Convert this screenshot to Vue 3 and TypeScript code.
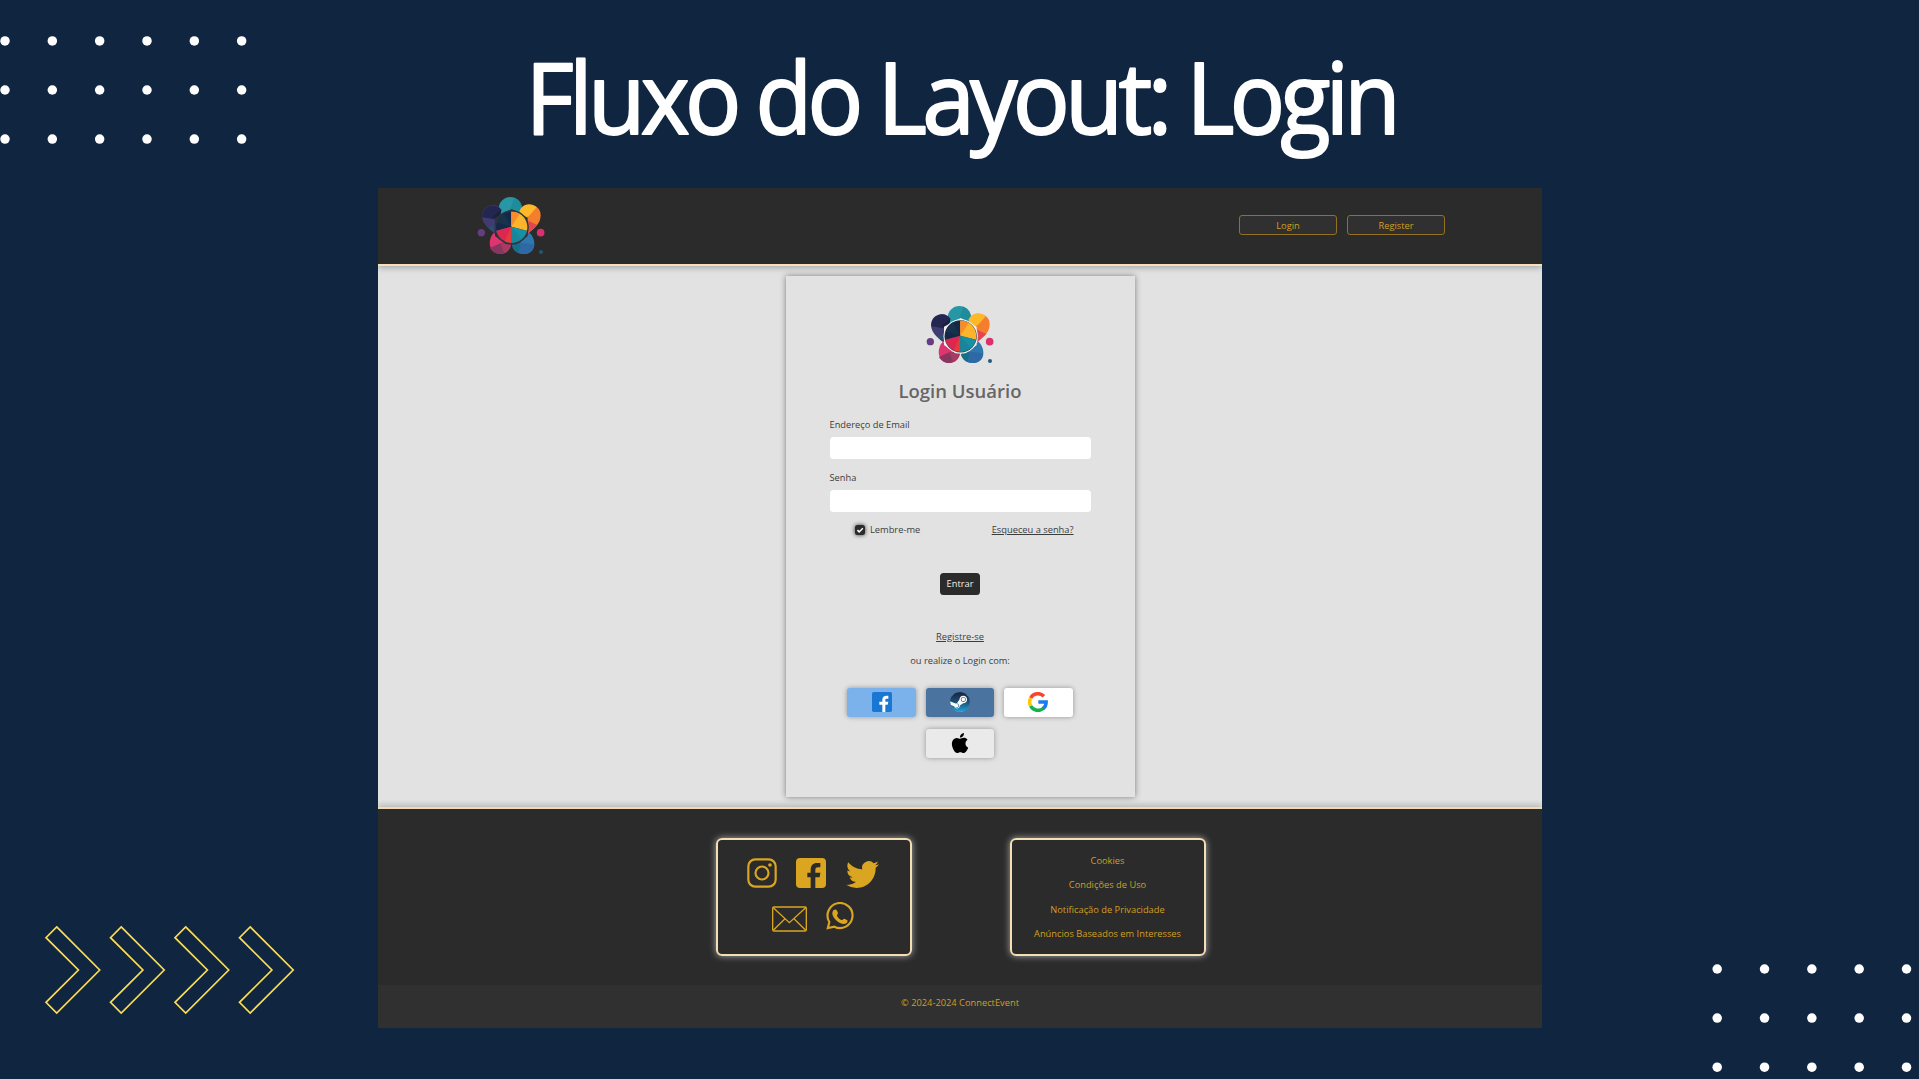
<script setup lang="ts">
import { defineComponent, h } from 'vue'

interface Word {
  text: string
  x: number
  width: number
}

const titleWords: Word[] = [
  { text: 'Fluxo', x: 525.5, width: 211 },
  { text: 'do', x: 755.5, width: 103 },
  { text: 'Layout:', x: 877.5, width: 290 },
  { text: 'Login', x: 1186.5, width: 209.5 },
]

const topDots = Array.from({ length: 18 }, (_, i) => ({ x: 5 + (i % 6) * 47.33, y: 4.9 + Math.floor(i / 6) * 49.1 }))
const bottomDots = Array.from({ length: 15 }, (_, i) => ({ x: 5.2 + (i % 5) * 47.33, y: 5 + Math.floor(i / 5) * 49.1 }))
const chevrons = [0, 1, 2, 3].map((i) => i * 64.5)
const links: string[] = ['Cookies', 'Condições de Uso', 'Notificação de Privacidade', 'Anúncios Baseados em Interesses']

const petal = (d: string, fill: string) => h('path', { d, fill })

const BrandLogo = defineComponent({
  props: { ring: { type: String, default: '#f1f1f3' } },
  setup(props) {
    return () =>
      h('svg', { viewBox: '63 30 206 178', width: 68.67, height: 59.33 }, [
        petal('M128 68a35 35 0 0 1 70 0l-6 38h-58z', '#2796a5'),
        petal('M163 68l12-33a35 35 0 0 1 23 35l-6 22z', '#1f8c9b'),
        petal('M115 142C96 126 78 112 78 89a32 32 0 0 1 58-18l-8 50z', '#403c70'),
        petal('M79 94a32 32 0 0 1 57-23l-12 30z', '#23264f'),
        petal('M110 92l26-21-6 35z', '#1b2040'),
        petal('M112 139L97 124l20-6z', '#2c4e70'),
        petal('M217 142c20-16 37-30 37-54a32 32 0 0 0-58-18l8 50z', '#f47e2d'),
        petal('M190 75a32 32 0 0 1 52-11l-23 26-15 6z', '#fdb927'),
        petal('M217 104l27 13-27 24z', '#e2474f'),
        petal('M113 141c-18 18-18 61 19 63 20 0 30-13 33-27l-18-20z', '#e0346f'),
        petal('M102 186l31-14 30-2c2 17-13 34-31 34-14 0-25-8-30-18z', '#87365f'),
        petal('M133 172l32 3c-2 12-11 21-21 26z', '#a83a63'),
        petal('M221 140c22 23 20 64-18 64-22 0-32-13-35-27l18-18z', '#2d78ae'),
        petal('M168 177l26-8-5 32c-12-4-19-14-21-24z', '#176e89'),
        petal('M194 170l40 5c-1 16-12 29-31 29-6 0-11-1-14-3z', '#2e68a5'),
        petal('M167 69l48 26v55l-34 25h-30l-34-25V95z', props.ring),
        h('circle', { cx: 167, cy: 124, r: 51.5, fill: props.ring }),
        h('circle', { cx: 167, cy: 124, r: 48.5, fill: '#38404c' }),
        petal('M166 122V77a47 47 0 0 0-45 57z', '#14294a'),
        petal('M166 122l-22-40a47 47 0 0 0-22 28z', '#17324a'),
        petal('M166 122V77a47 47 0 0 1 47 57z', '#fdb42b'),
        petal('M166 122V77c9 0 17 2 25 7z', '#f68c2c'),
        petal('M166 122l-45 12a47 47 0 0 0 45 36z', '#dc2850'),
        petal('M166 122l-20 44c6 3 13 4 20 4z', '#e43b3d'),
        petal('M166 122l47 12a47 47 0 0 1-47 36z', '#1690a5'),
        petal('M166 122l31 38c-9 7-19 10-31 10z', '#1a849b'),
        h('circle', { cx: 76, cy: 140, r: 11, fill: '#653d80' }),
        h('circle', { cx: 254, cy: 140, r: 11.5, fill: '#dd2f6c' }),
        h('circle', { cx: 255, cy: 198, r: 6, fill: '#205879' }),
      ])
  },
})
</script>

<template>
  <div class="slide">
    <svg class="dots dots-top" width="252" height="109">
      <circle v-for="(d, i) in topDots" :key="i" :cx="d.x" :cy="d.y" r="4.75" fill="#fff" />
    </svg>
    <svg class="dots dots-bottom" width="207" height="109">
      <circle v-for="(d, i) in bottomDots" :key="i" :cx="d.x" :cy="d.y" r="4.75" fill="#fff" />
    </svg>
    <svg class="chevrons" width="254" height="94" viewBox="43 923 254 94">
      <path
        v-for="x in chevrons"
        :key="x"
        :transform="`translate(${x} 0)`"
        d="M56.7 926.9L99.7 970L56.7 1013.1L46 1002.3L78.4 970L46 937.7Z"
        fill="none"
        stroke="#fbdc57"
        stroke-width="1.7"
      />
    </svg>

    <h1 class="title">
      <svg width="1919" height="188">
        <text
          v-for="w in titleWords"
          :key="w.text"
          :x="w.x"
          y="134"
          :textLength="w.width"
          lengthAdjust="spacingAndGlyphs"
        >{{ w.text }}</text>
      </svg>
    </h1>

    <div class="site">
      <header class="topbar">
        <BrandLogo ring="#2f3338" />
        <nav class="nav">
          <button class="nav-btn">Login</button>
          <button class="nav-btn">Register</button>
        </nav>
      </header>

      <main class="main">
        <form class="card" @submit.prevent>
          <BrandLogo class="card-logo" />
          <h2>Login Usuário</h2>
          <label>Endereço de Email</label>
          <div class="field"></div>
          <label class="second">Senha</label>
          <div class="field"></div>
          <div class="options">
            <span class="remember">
              <span class="check">
                <svg width="8" height="8" viewBox="0 0 8 8">
                  <path d="M1.4 4.1L3.2 5.9L6.8 2.2" fill="none" stroke="#fff" stroke-width="1.5" />
                </svg>
              </span>
              Lembre-me
            </span>
            <a>Esqueceu a senha?</a>
          </div>
          <button class="enter">Entrar</button>
          <a class="signup">Registre-se</a>
          <p>ou realize o Login com:</p>
          <div class="social">
            <span class="provider fb">
              <svg width="20" height="20" viewBox="0 0 60 60">
                <rect width="60" height="60" rx="5" fill="#1976d2" />
                <path d="M31 60V38h-9v-9h9v-6c0-8 5-12 13-12h5v9h-4c-4 0-5 1-5 4v5h9l-2 9h-7v22z" fill="#fff" />
              </svg>
            </span>
            <span class="provider steam">
              <svg width="20" height="20" viewBox="0 0 24 24">
                <defs>
                  <linearGradient id="steamFill" x1="0" y1="0" x2="0" y2="1">
                    <stop offset="0" stop-color="#17213d" />
                    <stop offset="0.5" stop-color="#1d5077" />
                    <stop offset="1" stop-color="#23a4da" />
                  </linearGradient>
                </defs>
                <circle cx="12" cy="12" r="11.6" fill="#fff" />
                <path
                  fill="url(#steamFill)"
                  d="M11.979 0C5.678 0 .511 4.86.022 11.037l6.432 2.658c.545-.371 1.203-.59 1.912-.59.063 0 .125.004.188.006l2.861-4.142V8.91c0-2.495 2.028-4.524 4.524-4.524 2.494 0 4.524 2.031 4.524 4.527s-2.03 4.525-4.524 4.525h-.105l-4.076 2.911c0 .052.004.105.004.159 0 1.875-1.515 3.396-3.39 3.396-1.635 0-3.016-1.173-3.331-2.727L.436 15.27C1.862 20.307 6.486 24 11.979 24c6.627 0 11.999-5.373 11.999-12S18.605 0 11.979 0zM7.54 18.21l-1.473-.61c.262.543.714.999 1.314 1.25 1.297.539 2.793-.076 3.332-1.375.263-.63.264-1.319.005-1.949s-.75-1.121-1.377-1.383c-.624-.26-1.29-.249-1.878-.03l1.523.63c.956.4 1.409 1.5 1.009 2.455-.397.957-1.497 1.41-2.454 1.012H7.54zm11.415-9.303c0-1.662-1.353-3.015-3.015-3.015-1.665 0-3.015 1.353-3.015 3.015 0 1.665 1.35 3.015 3.015 3.015 1.663 0 3.015-1.35 3.015-3.015zm-5.273-.005c0-1.252 1.013-2.266 2.265-2.266 1.249 0 2.266 1.014 2.266 2.266 0 1.251-1.017 2.265-2.266 2.265-1.253 0-2.265-1.014-2.265-2.265z"
                />
              </svg>
            </span>
            <span class="provider google">
              <svg width="20" height="20" viewBox="0 0 60 60">
                <g fill="none" stroke-width="10.5">
                  <path d="M8.1 18A25 25 0 0 1 47.8 12.6" stroke="#f8452c" />
                  <path d="M8.1 42A25 25 0 0 1 8.1 18" stroke="#fdc800" />
                  <path d="M46.5 48.9A25 25 0 0 1 8.1 42" stroke="#12b347" />
                  <path d="M31 30H54.5A25 25 0 0 1 45 50" stroke="#1b7cea" />
                </g>
              </svg>
            </span>
            <span class="provider apple">
              <svg width="20" height="20" viewBox="0 0 24 24">
                <path
                  d="M12.152 6.896c-.948 0-2.415-1.078-3.96-1.04-2.04.027-3.91 1.183-4.961 3.014-2.117 3.675-.546 9.103 1.519 12.09 1.013 1.454 2.208 3.09 3.792 3.039 1.52-.065 2.09-.987 3.935-.987 1.831 0 2.35.987 3.96.948 1.637-.026 2.676-1.48 3.676-2.948 1.156-1.688 1.636-3.325 1.662-3.415-.039-.013-3.182-1.221-3.22-4.857-.026-3.04 2.48-4.494 2.597-4.559-1.429-2.09-3.623-2.324-4.39-2.376-2-.156-3.675 1.09-4.61 1.09zM15.53 3.83c.843-1.012 1.4-2.427 1.245-3.83-1.207.052-2.662.805-3.532 1.818-.78.896-1.454 2.338-1.273 3.714 1.338.104 2.715-.688 3.559-1.701"
                />
              </svg>
            </span>
          </div>
        </form>
      </main>

      <footer class="footer">
        <div class="panels">
          <div class="panel networks">
            <div class="row row-a">
              <svg width="30" height="30" viewBox="0 0 90 90" fill="none" stroke="#daa520" stroke-width="6.5">
                <rect x="4" y="4" width="82" height="82" rx="21" />
                <circle cx="45" cy="45" r="19.5" stroke-width="6.5" />
                <circle cx="69" cy="21" r="5.5" fill="#daa520" stroke="none" />
              </svg>
              <svg width="30" height="30" viewBox="0 0 90 90">
                <path
                  fill="#daa520"
                  d="M12 0H78Q90 0 90 12V78Q90 90 78 90H58V58H71L73 44H58V36C58 30 61 28 66 28H73V15H63C51 15 44 23 44 35V44H34V58H44V90H12Q0 90 0 78V12Q0 0 12 0Z"
                />
              </svg>
              <svg class="bird" width="33" height="33" viewBox="0 0 24 24">
                <path
                  fill="#daa520"
                  d="M23.953 4.57a10 10 0 01-2.825.775 4.958 4.958 0 002.163-2.723c-.951.555-2.005.959-3.127 1.184a4.92 4.92 0 00-8.384 4.482C7.69 8.095 4.067 6.13 1.64 3.162a4.822 4.822 0 00-.666 2.475c0 1.71.87 3.213 2.188 4.096a4.904 4.904 0 01-2.228-.616v.06a4.923 4.923 0 003.946 4.827 4.996 4.996 0 01-2.212.085 4.936 4.936 0 004.604 3.417 9.867 9.867 0 01-6.102 2.105c-.39 0-.779-.023-1.17-.067a13.995 13.995 0 007.557 2.209c9.053 0 13.998-7.496 13.998-13.985 0-.21 0-.42-.015-.63A9.935 9.935 0 0024 4.59z"
                />
              </svg>
            </div>
            <div class="row row-b">
              <svg class="mail" width="35" height="26" viewBox="0 0 105 78" fill="none" stroke="#daa520" stroke-width="4">
                <rect x="2" y="3" width="101" height="72" rx="4" />
                <path d="M4 5L52 50L101 5M4 73L39 38M101 73L66 38" />
              </svg>
              <svg width="28" height="28" viewBox="0 0 84 84">
                <path
                  d="M5.5 78L10 60A37.5 37.5 0 1 1 25 74Z"
                  fill="none"
                  stroke="#daa520"
                  stroke-width="6.5"
                />
                <path
                  d="M23 24c4-3 8-2 10 2l3 7c1 3-4 5-3 8 3 6 8 11 14 13 3 1 5-5 8-4l8 4c3 1 2 6-1 9-7 5-15 3-24-2-9-6-15-13-18-21-2-6-1-12 3-16z"
                  fill="#daa520"
                />
              </svg>
            </div>
          </div>
          <div class="panel links">
            <a v-for="l in links" :key="l">{{ l }}</a>
          </div>
        </div>
        <div class="copyright">© 2024-2024 ConnectEvent</div>
      </footer>
    </div>
  </div>
</template>

<style>
body {
  margin: 0;
  background: #102540;
}
</style>

<style scoped>
.slide {
  position: relative;
  width: 1919px;
  height: 1079px;
  overflow: hidden;
  background: #102540;
  font-family: 'Open Sans', 'Noto Sans', sans-serif;
  font-size: 9.3px;
}
svg {
  display: block;
  flex: none;
}
.dots,
.chevrons {
  position: absolute;
}
.dots-top {
  left: 0;
  top: 36px;
}
.dots-bottom {
  left: 1712px;
  top: 964px;
}
.chevrons {
  left: 43px;
  top: 923px;
}
.title {
  margin: 0;
  height: 188px;
  font-weight: 400;
  font-size: 98.5px;
}
.title text {
  fill: #fff;
  stroke: #fff;
  stroke-width: 2px;
  stroke-linejoin: round;
  letter-spacing: -5px;
}
.site {
  width: 1164px;
  height: 840px;
  margin-left: 378px;
  display: flex;
  flex-direction: column;
  background: #e2e2e2;
  overflow: hidden;
}
.topbar {
  box-sizing: border-box;
  height: 78px;
  flex: none;
  display: flex;
  justify-content: space-between;
  align-items: flex-start;
  padding: 8px 97px 0 98.6px;
  background: #2b2b2b;
  border-bottom: 2px solid #f8dfb4;
  box-shadow: 0 2px 6px rgba(0, 0, 0, 0.25);
}
.nav {
  display: flex;
  gap: 10px;
  margin-top: 19px;
}
.nav-btn {
  box-sizing: border-box;
  width: 98px;
  height: 20px;
  padding: 1px 0 0;
  border: 1px solid #94701f;
  border-radius: 3px;
  background: #303030;
  color: #d19f23;
  font: inherit;
}
.main {
  flex: 1;
  display: flex;
  justify-content: center;
  align-items: flex-start;
  padding-top: 10px;
}
.card {
  box-sizing: border-box;
  width: 349px;
  height: 521px;
  padding: 29px 44px 0;
  background: #e2e2e2;
  box-shadow: 0 0 6px rgba(0, 0, 0, 0.45);
  display: flex;
  flex-direction: column;
  align-items: center;
  color: #3c3c3c;
}
h2 {
  margin: 13.67px 0 0;
  font-size: 18.5px;
  line-height: 26px;
  font-weight: 600;
  color: #666;
}
label {
  align-self: stretch;
  margin-top: 14px;
  line-height: 14px;
}
label.second {
  margin-top: 12px;
}
.field {
  box-sizing: border-box;
  align-self: stretch;
  height: 22px;
  margin-top: 5px;
  border-radius: 3.5px;
  background: #fff;
}
.options {
  align-self: stretch;
  display: flex;
  justify-content: space-between;
  padding: 0 17px 0 25px;
  margin-top: 11px;
  line-height: 14px;
}
.remember {
  display: flex;
  align-items: center;
  gap: 5px;
}
.check {
  width: 10.5px;
  height: 10.5px;
  border-radius: 2.5px;
  background: #2b2b2b;
  box-shadow: 0 0 4px rgba(0, 0, 0, 0.8);
  display: flex;
  align-items: center;
  justify-content: center;
}
a {
  text-decoration: underline;
}
.enter {
  width: 40px;
  height: 22px;
  margin-top: 35.6px;
  padding: 0;
  border: 0;
  border-radius: 3.5px;
  background: #2b2b2b;
  color: #eee;
  font: inherit;
}
.signup {
  margin-top: 35.4px;
  line-height: 14px;
}
p {
  margin: 10px 0 0;
  line-height: 14px;
}
.social {
  display: flex;
  flex-wrap: wrap;
  justify-content: center;
  gap: 12px 9.8px;
  margin-top: 20px;
}
.provider {
  width: 68.7px;
  height: 29px;
  border-radius: 3px;
  box-shadow: 0 0 5px rgba(0, 0, 0, 0.35);
  display: flex;
  align-items: center;
  justify-content: center;
}
.fb {
  background: #7cb2ec;
}
.steam {
  background: #4a749f;
}
.google {
  background: #fff;
}
.apple {
  background: #eaeaea;
}
.footer {
  flex: none;
  height: 221px;
  box-sizing: border-box;
  display: flex;
  flex-direction: column;
  background: #2b2b2b;
  border-top: 2px solid #f3d9ab;
  box-shadow: 0 -2px 6px rgba(0, 0, 0, 0.2);
}
.panels {
  flex: 1;
  display: flex;
  justify-content: center;
  align-items: flex-start;
  gap: 98px;
  padding-top: 29px;
  padding-left: 1px;
}
.panel {
  box-sizing: border-box;
  width: 196px;
  height: 118px;
  border: 2px solid #f5deb3;
  border-radius: 6px;
  box-shadow: 0 0 7px rgba(255, 255, 255, 0.6);
  display: flex;
  flex-direction: column;
}
.row {
  display: flex;
}
.row-a {
  gap: 19px;
  padding: 17.8px 0 0 29.5px;
}
.bird {
  margin-top: 0.5px;
  margin-left: 1px;
}
.row-b {
  gap: 19.3px;
  padding: 11px 0 0 54px;
}
.mail {
  margin-top: 4.2px;
}
.links {
  align-items: center;
  padding-top: 13.6px;
  gap: 10.5px;
}
.links a {
  text-decoration: none;
  line-height: 14px;
  color: #d19f23;
}
.copyright {
  height: 43px;
  line-height: 35px;
  text-align: center;
  background: #303030;
  color: #d19f23;
}
</style>
